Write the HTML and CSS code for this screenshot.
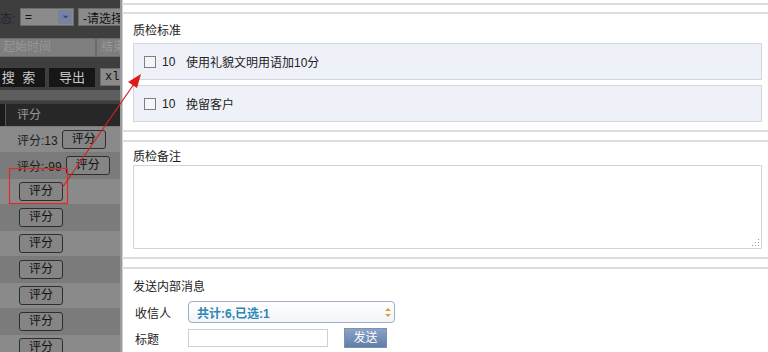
FILE: index.html
```html
<!DOCTYPE html>
<html lang="zh-CN">
<head>
  <meta charset="UTF-8" />
  <title>质检评分</title>
  <link rel="stylesheet" href="styles.css">
</head>
<body>
<div class="page">

  <!-- 背景列表（被遮罩） -->
  <div class="bg-page">
    <div class="bg-inner">
      <div class="filter-row">
        <span class="lbl">状态:</span>
        <span class="sel sel-eq">=<i class="sel-btn">&#8964;</i></span>
        <span class="sel sel-wide">-请选择</span>
      </div>
      <div class="filter-row">
        <span class="ipt">起始时间</span>
        <span class="ipt">结束时间</span>
      </div>
      <div class="filter-row">
        <span class="dark-btn search">搜 索</span>
        <span class="dark-btn">导出</span>
        <span class="sel sel-xls">xls</span>
      </div>
    </div>
    <div class="band"></div>
    <div class="grid">
      <div class="grid-head"><span>评分</span></div>
      <div class="grid-row"><span class="score">评分:13</span><span class="rate-btn">评分</span></div>
      <div class="grid-row alt"><span class="score">评分:-99</span><span class="rate-btn">评分</span></div>
      <div class="grid-row"><span class="rate-btn solo">评分</span></div>
      <div class="grid-row alt"><span class="rate-btn solo">评分</span></div>
      <div class="grid-row"><span class="rate-btn solo">评分</span></div>
      <div class="grid-row alt"><span class="rate-btn solo">评分</span></div>
      <div class="grid-row"><span class="rate-btn solo">评分</span></div>
      <div class="grid-row alt"><span class="rate-btn solo">评分</span></div>
      <div class="grid-row"><span class="rate-btn solo">评分</span></div>
    </div>
  </div>

  <!-- 右侧弹出面板 -->
  <div class="panel">
    <div class="section section-prev"></div>

    <div class="section">
      <div class="sec-title">质检标准</div>
      <label class="std-row"><span class="chk"></span><span class="pts">10</span>使用礼貌文明用语加10分</label>
      <label class="std-row"><span class="chk"></span><span class="pts">10</span>挽留客户</label>
    </div>

    <div class="section">
      <div class="sec-title tight">质检备注</div>
      <div class="memo"><span class="grip"></span></div>
    </div>

    <div class="section section-last">
      <div class="sec-title">发送内部消息</div>
      <div class="form-row first">
        <span class="form-lbl">收信人</span>
        <span class="receiver">共计:6,已选:1<i class="updown"></i></span>
      </div>
      <div class="form-row">
        <span class="form-lbl">标题</span>
        <span class="title-ipt"></span>
        <span class="send-btn">发送</span>
      </div>
      <div class="next-box"></div>
    </div>
  </div>

  <!-- 标注：红框与箭头 -->
  <svg class="mark" width="768" height="352" viewBox="0 0 768 352">
    <rect x="9.5" y="168.5" width="58" height="35" fill="none" stroke="#e02b2b" stroke-width="1.2"/>
    <line x1="62" y1="188" x2="134" y2="84" stroke="#d42020" stroke-width="1.2"/>
    <polygon points="141,74 128,82 137,88" fill="#e01818"/>
  </svg>
</div>
</body>
</html>
```

FILE: styles.css
```css
body {
  margin: 0;
  font-family: "Liberation Sans", "Noto Sans CJK SC", sans-serif;
  font-size: 12px;
  color: #222;
  background: #fff;
}

.page {
  position: relative;
  display: flex;
  width: 768px;
  height: 352px;
  overflow: hidden;
}

/* 左侧被遮罩的列表页 */
.bg-page {
  width: 120px;
  flex: none;
  overflow: hidden;
  background: #3e3e3e;
}

.bg-inner {
  margin-left: -12px;
  width: 300px;
  padding-top: 8px;
  height: 82px;
}

.filter-row {
  display: flex;
  align-items: center;
  gap: 4px;
  height: 18px;
  margin-bottom: 12px;
  white-space: nowrap;
}

.lbl {
  color: #1e2530;
  width: 28px;
  font-size: 12px;
}

.sel {
  display: flex;
  align-items: center;
  height: 16px;
  border: 1px solid #6c6c6c;
  background: #8b8b8b;
  color: #111;
  padding-left: 4px;
  box-sizing: content-box;
  font-size: 12px;
}

.sel-eq {
  width: 48px;
}

.sel-btn {
  margin-left: auto;
  width: 14px;
  height: 14px;
  background: #7582a0;
  color: #2a3550;
  font-style: normal;
  font-size: 11px;
  line-height: 8px;
  text-align: center;
  margin-right: 1px;
}

.sel-wide {
  width: 80px;
}

.ipt {
  width: 92px;
  height: 17px;
  line-height: 17px;
  padding-left: 14px;
  background: #7e7e7e;
  border: 1px solid #6a6a6a;
  color: #979797;
  font-size: 12px;
}

.ipt + .ipt {
  padding-left: 4px;
  margin-left: -4px;
}

.dark-btn {
  width: 46px;
  height: 19px;
  line-height: 19px;
  text-align: center;
  background: #161616;
  color: #c8c8c8;
  font-size: 13px;
}

.dark-btn.search {
  width: 57px;
  padding-left: 6px;
  box-sizing: border-box;
  letter-spacing: 2px;
}

.sel-xls {
  width: 40px;
  font-family: "Liberation Mono", monospace;
  margin-left: 1px;
}

.band {
  height: 10px;
  background: #5e5e5e;
  border-bottom: 1px solid #4a4a4a;
}

.grid-head {
  height: 22px;
  margin-top: 3px;
  background: #272727;
  display: flex;
  align-items: center;
  border-left: 5px solid #1b1b1b;
}

.grid-head span {
  border-left: 1px solid #555;
  padding-left: 11px;
  color: #9a9a9a;
  line-height: 22px;
}

.grid-row {
  height: 26px;
  display: flex;
  align-items: center;
  gap: 3px;
  padding-left: 17px;
  background: #8a8a8a;
  border-top: 1px solid #7a7a7a;
  box-sizing: border-box;
  white-space: nowrap;
}

.grid-row.alt {
  background: #7b7b7b;
}

.score {
  color: #1c1c1c;
}

.rate-btn {
  display: inline-block;
  width: 42px;
  height: 17px;
  line-height: 17px;
  text-align: center;
  border: 1px solid #2e2e2e;
  border-radius: 3px;
  background: #858585;
  color: #111;
  margin-left: 1px;
}

.rate-btn.solo {
  margin-left: 2px;
}

/* 右侧面板 */
.panel {
  flex: 1;
  background: #fff;
  border-left: 2px solid #9a9a9a;
  box-shadow: inset 1px 0 0 #cfcfcf;
}

.section {
  border-top: 2px solid #dcdcdc;
  border-bottom: 2px solid #dcdcdc;
  padding: 0 6px 8px 11px;
  margin-bottom: 8px;
}

.section-prev {
  border-top: none;
  height: 3px;
  padding: 0;
  margin-bottom: 7px;
}

.sec-title {
  padding-top: 7px;
  line-height: 20px;
  margin-bottom: 2px;
  color: #222;
}

.sec-title.tight {
  padding-top: 8px;
  line-height: 15px;
  margin-bottom: 0;
}

.std-row {
  display: flex;
  align-items: center;
  height: 35px;
  background: #eef1f8;
  border: 1px solid #d2d6de;
  padding-left: 10px;
  margin-bottom: 5px;
  color: #222;
}

.std-row:last-of-type {
  margin-bottom: 0;
}

.chk {
  width: 10px;
  height: 10px;
  border: 1px solid #7b7f86;
  background: #f4f5f7;
  margin-right: 6px;
}

.pts {
  width: 24px;
}

.memo {
  position: relative;
  height: 82px;
  border: 1px solid #d4d4d4;
  border-radius: 1px;
}

.grip {
  position: absolute;
  right: 2px;
  bottom: 2px;
  width: 8px;
  height: 8px;
  background-image: radial-gradient(circle, #9a9a9a 0.8px, transparent 1px);
  background-size: 3px 3px;
  clip-path: polygon(100% 0, 100% 100%, 0 100%);
}

.section-last {
  border-bottom: none;
  padding-top: 0;
}

.section-last .sec-title {
  padding-top: 9px;
  line-height: 18px;
  margin-bottom: 5px;
}

.form-row {
  display: flex;
  align-items: center;
  margin-bottom: 5px;
}

.form-row.first {
  height: 22px;
}

.form-lbl {
  width: 53px;
  padding-left: 2px;
}

.receiver {
  display: flex;
  align-items: center;
  width: 197px;
  height: 20px;
  padding-left: 8px;
  border: 1px solid #9fb0c6;
  border-radius: 4px;
  background: linear-gradient(#ffffff, #f2f4f8);
  color: #2d86b8;
  font-weight: bold;
}

.updown {
  margin-left: auto;
  margin-right: 6px;
  width: 0;
  height: 9px;
  position: relative;
}

.updown::before,
.updown::after {
  content: '';
  position: absolute;
  left: -3px;
  border-left: 3px solid transparent;
  border-right: 3px solid transparent;
}

.updown::before {
  top: 0;
  border-bottom: 3px solid #d4a23a;
}

.updown::after {
  bottom: 0;
  border-top: 3px solid #d4a23a;
}

.title-ipt {
  width: 138px;
  height: 16px;
  border: 1px solid #d0d0d0;
}

.send-btn {
  margin-left: 16px;
  width: 41px;
  height: 18px;
  line-height: 18px;
  text-align: center;
  color: #fff;
  background: linear-gradient(#8aa3c8, #5e7ea8);
  border: 1px solid #7d90ac;
}

.next-box {
  margin-left: 55px;
  border-top: 2px solid #cfcfcf;
}

.mark {
  position: absolute;
  left: 0;
  top: 0;
  pointer-events: none;
}
```
